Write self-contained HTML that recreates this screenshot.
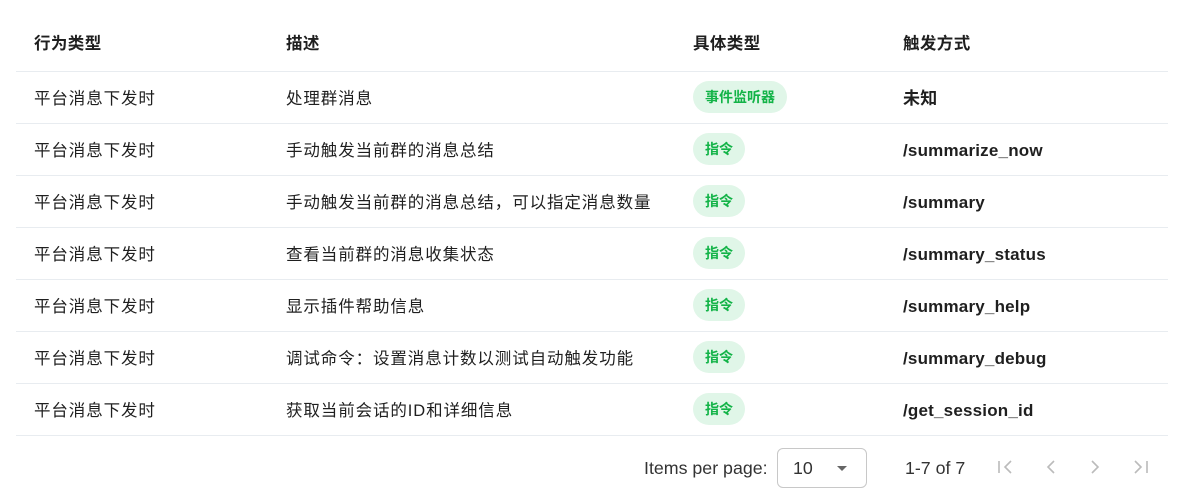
<!DOCTYPE html>
<html><head><meta charset="utf-8"><style>
*{margin:0;padding:0;box-sizing:border-box}
body{width:1181px;height:498px;background:#fff;font-family:"Liberation Sans","Noto Sans CJK SC",sans-serif;color:#1f1f1f;font-size:16.5px;position:relative;overflow:hidden}
.line{position:absolute;left:16px;width:1152px;height:1px;background:#e8ecf0}
.t{position:absolute;white-space:nowrap;line-height:20px;letter-spacing:0.9px}
.h{font-weight:bold;letter-spacing:0.4px}
.chip{position:absolute;left:693px;height:32px;border-radius:16px;background:#e0f6e8;color:#12b347;font-size:14px;font-weight:bold;line-height:32px;padding:0 12px;white-space:nowrap}
.b{font-weight:bold;font-size:17px;letter-spacing:0.2px}
.f{position:absolute;font-size:17.8px;color:#333;line-height:20px;white-space:nowrap}
</style></head><body>
<div class="t h" style="left:34px;top:34px">行为类型</div>
<div class="t h" style="left:286px;top:34px">描述</div>
<div class="t h" style="left:693px;top:34px">具体类型</div>
<div class="t h" style="left:903px;top:34px">触发方式</div>
<div class="line" style="top:71px"></div>
<div class="line" style="top:123px"></div>
<div class="line" style="top:175px"></div>
<div class="line" style="top:227px"></div>
<div class="line" style="top:279px"></div>
<div class="line" style="top:331px"></div>
<div class="line" style="top:383px"></div>
<div class="line" style="top:435px"></div>

<div class="t" style="left:34px;top:89px">平台消息下发时</div><div class="t" style="left:286px;top:89px">处理群消息</div><div class="chip" style="top:81px">事件监听器</div><div class="t b" style="left:903px;top:89px">未知</div>
<div class="t" style="left:34px;top:141px">平台消息下发时</div><div class="t" style="left:286px;top:141px">手动触发当前群的消息总结</div><div class="chip" style="top:133px">指令</div><div class="t b" style="left:903px;top:141px">/summarize_now</div>
<div class="t" style="left:34px;top:193px">平台消息下发时</div><div class="t" style="left:286px;top:193px">手动触发当前群的消息总结，可以指定消息数量</div><div class="chip" style="top:185px">指令</div><div class="t b" style="left:903px;top:193px">/summary</div>
<div class="t" style="left:34px;top:245px">平台消息下发时</div><div class="t" style="left:286px;top:245px">查看当前群的消息收集状态</div><div class="chip" style="top:237px">指令</div><div class="t b" style="left:903px;top:245px">/summary_status</div>
<div class="t" style="left:34px;top:297px">平台消息下发时</div><div class="t" style="left:286px;top:297px">显示插件帮助信息</div><div class="chip" style="top:289px">指令</div><div class="t b" style="left:903px;top:297px">/summary_help</div>
<div class="t" style="left:34px;top:349px">平台消息下发时</div><div class="t" style="left:286px;top:349px">调试命令：设置消息计数以测试自动触发功能</div><div class="chip" style="top:341px">指令</div><div class="t b" style="left:903px;top:349px">/summary_debug</div>
<div class="t" style="left:34px;top:401px">平台消息下发时</div><div class="t" style="left:286px;top:401px">获取当前会话的ID和详细信息</div><div class="chip" style="top:393px">指令</div><div class="t b" style="left:903px;top:401px">/get_session_id</div>

<div class="f" style="left:644px;top:458px">Items per page:</div>
<div style="position:absolute;left:777px;top:448px;width:90px;height:40px;border:1px solid #c8c8c8;border-radius:6px"></div>
<div class="f" style="left:793px;top:458px">10</div>
<svg style="position:absolute;left:836px;top:464px" width="12" height="8"><path d="M1 2h10L6 7z" fill="#666"/></svg>
<div class="f" style="left:905px;top:458px">1-7 of 7</div>
<svg style="position:absolute;left:990px;top:455px" width="170" height="24" fill="none" stroke="#bbb" stroke-width="1.6">
<path d="M9 6v12M21 6l-6 6 6 6"/>
<path d="M64 6l-6 6 6 6"/>
<path d="M102 6l6 6-6 6"/>
<path d="M145 6l6 6-6 6M157 6v12"/>
</svg>
</body></html>
